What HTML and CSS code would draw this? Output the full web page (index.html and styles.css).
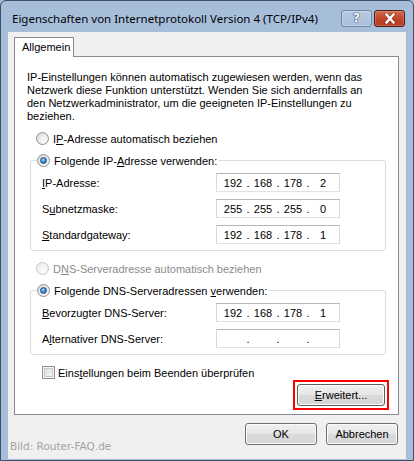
FILE: index.html
```html
<!DOCTYPE html>
<html lang="de">
<head>
<meta charset="utf-8">
<title>Eigenschaften von Internetprotokoll Version 4 (TCP/IPv4)</title>
<link rel="stylesheet" href="styles.css">
</head>
<body>
<div class="window">
  <div class="titlebar">
    <span class="title">Eigenschaften von Internetprotokoll Version 4 (TCP/IPv4)</span>
    <div class="caption-btns">
      <span class="cbtn help">?</span>
      <span class="cbtn close">
        <svg width="14" height="11" viewBox="0 0 14 11">
          <path d="M3.5 1.5 L10.5 9.5 M10.5 1.5 L3.5 9.5" stroke="#6a2414" stroke-width="4" stroke-linecap="square" opacity="0.55"/>
          <path d="M3.5 1.5 L10.5 9.5 M10.5 1.5 L3.5 9.5" stroke="#ffffff" stroke-width="2.4" stroke-linecap="square"/>
        </svg>
      </span>
    </div>
  </div>
  <div class="client">
    <div class="tabs"><span class="tab">Allgemein</span></div>
    <div class="panel">
      <p class="intro">IP-Einstellungen können automatisch zugewiesen werden, wenn das Netzwerk diese Funktion unterstützt. Wenden Sie sich andernfalls an den Netzwerkadministrator, um die geeigneten IP-Einstellungen zu beziehen.</p>

      <div class="opt top-opt"><span class="radio"></span><span>I<u>P</u>-Adresse automatisch beziehen</span></div>

      <fieldset class="group">
        <legend><span class="opt"><span class="radio checked"></span><span>Folgende IP-<u>A</u>dresse verwenden:</span></span></legend>
        <div class="field-row">
          <span class="label"><u>I</u>P-Adresse:</span>
          <div class="ip"><span class="seg">192</span><span class="dot">.</span><span class="seg">168</span><span class="dot">.</span><span class="seg">178</span><span class="dot">.</span><span class="seg">2</span></div>
        </div>
        <div class="field-row">
          <span class="label">S<u>u</u>bnetzmaske:</span>
          <div class="ip"><span class="seg">255</span><span class="dot">.</span><span class="seg">255</span><span class="dot">.</span><span class="seg">255</span><span class="dot">.</span><span class="seg">0</span></div>
        </div>
        <div class="field-row">
          <span class="label"><u>S</u>tandardgateway:</span>
          <div class="ip"><span class="seg">192</span><span class="dot">.</span><span class="seg">168</span><span class="dot">.</span><span class="seg">178</span><span class="dot">.</span><span class="seg">1</span></div>
        </div>
      </fieldset>

      <div class="opt top-opt disabled dns-auto"><span class="radio"></span><span>D<u>N</u>S-Serveradresse automatisch beziehen</span></div>

      <fieldset class="group">
        <legend><span class="opt"><span class="radio checked"></span><span>Folgende DNS-Serveradressen <u>v</u>erwenden:</span></span></legend>
        <div class="field-row">
          <span class="label"><u>B</u>evorzugter DNS-Server:</span>
          <div class="ip"><span class="seg">192</span><span class="dot">.</span><span class="seg">168</span><span class="dot">.</span><span class="seg">178</span><span class="dot">.</span><span class="seg">1</span></div>
        </div>
        <div class="field-row">
          <span class="label">A<u>l</u>ternativer DNS-Server:</span>
          <div class="ip"><span class="seg"></span><span class="dot">.</span><span class="seg"></span><span class="dot">.</span><span class="seg"></span><span class="dot">.</span><span class="seg"></span></div>
        </div>
      </fieldset>

      <div class="check-row"><span class="checkbox"></span><span>Eins<u>t</u>ellungen beim Beenden überprüfen</span></div>

      <div class="adv-row">
        <div class="highlight"><button class="btn adv"><u>E</u>rweitert...</button></div>
      </div>
    </div>
    <div class="footer">
      <span class="watermark">Bild: Router-FAQ.de</span>
      <button class="btn">OK</button>
      <button class="btn">Abbrechen</button>
    </div>
  </div>
</div>
</body>
</html>
```
FILE: styles.css
```css
html, body {
  margin: 0;
  padding: 0;
  background: #a7bedb;
}

body {
  font-family: "Liberation Sans", Arial, sans-serif;
  font-size: 11px;
  color: #000;
}

.window {
  width: 414px;
  height: 461px;
  box-sizing: border-box;
  border: 1px solid #3f506a;
  border-radius: 6px 6px 0 0;
  background: #a7bedb;
  padding: 0 7px 1px;
  display: flex;
  flex-direction: column;
}

.titlebar {
  height: 31px;
  flex: none;
  display: flex;
  align-items: flex-start;
}

.title {
  font-family: "Noto Sans", "Open Sans", sans-serif;
  font-size: 11.5px;
  line-height: 17px;
  margin-top: 9px;
  padding-left: 4px;
  color: #000;
  white-space: nowrap;
}

.caption-btns {
  margin-left: auto;
  margin-top: 9px;
  margin-right: 1px;
  display: flex;
  gap: 2px;
}

.cbtn {
  width: 31px;
  height: 17px;
  box-sizing: border-box;
  border-radius: 3px;
  display: flex;
  align-items: center;
  justify-content: center;
}

.help {
  border: 1px solid #6d86a6;
  background: linear-gradient(#b7cbe3, #a9bfdc);
  box-shadow: inset 0 0 0 1px rgba(255,255,255,0.25);
  color: #fff;
  font-family: "DejaVu Sans", sans-serif;
  font-weight: bold;
  font-size: 12px;
  line-height: 15px;
  text-shadow: 0 0 1px #2c3d55, 0 0 1px #2c3d55, 0 0 1px #2c3d55;
}

.close {
  border: 1px solid #4e1e14;
  background: linear-gradient(#d06a4f, #c2432b 55%, #b83b24);
  box-shadow: inset 0 0 0 1px rgba(255,255,255,0.2);
}

.client {
  flex: 1;
  background: #f0f0f0;
  padding: 5px 7px 0 6px;
  display: flex;
  flex-direction: column;
}

.tabs {
  display: flex;
  position: relative;
  z-index: 1;
  margin-bottom: -1px;
}

.tab {
  width: 60px;
  height: 20px;
  box-sizing: border-box;
  border: 1px solid #898c95;
  border-bottom: none;
  background: #fff;
  padding-left: 7px;
  line-height: 19px;
}

.panel {
  border: 1px solid #898c95;
  background: #fff;
  padding: 14px 12px 4px 12px;
}

.intro {
  margin: 0;
  width: 342px;
  line-height: 13px;
}

.opt {
  display: flex;
  align-items: center;
  height: 15px;
  gap: 4px;
  white-space: nowrap;
}

.top-opt {
  margin-top: 8px;
  padding-left: 9px;
}

.dns-auto {
  margin-top: 10px;
}

.disabled {
  color: #8a8a8a;
}

.radio {
  width: 13px;
  height: 13px;
  box-sizing: border-box;
  border-radius: 50%;
  border: 1px solid #8f9194;
  background: radial-gradient(circle at 65% 70%, #fbfbfb 0, #ececec 45%, #d4d4d4 100%);
  display: flex;
  align-items: center;
  justify-content: center;
  flex: none;
}

.disabled .radio {
  border-color: #c4c6c8;
  background: radial-gradient(circle at 65% 70%, #fdfdfd 0, #f1f1f1 60%, #e4e4e4 100%);
}

.radio.checked::after {
  content: "";
  width: 7px;
  height: 7px;
  box-sizing: border-box;
  border-radius: 50%;
  border: 1px solid #1f4b7d;
  background: radial-gradient(circle at 40% 35%, #bfe6ff 0, #4a9fe6 35%, #1c5fa8 100%);
}

.group {
  margin: 7px 0 0 3px;
  padding: 5px 0 6px 11px;
  border: 1px solid #d5dfe5;
  border-radius: 3px;
  min-width: 0;
}

.group legend {
  margin-left: -5px;
  padding: 0 2px 0 0;
}

.field-row {
  display: flex;
  align-items: center;
  height: 19px;
}

.field-row + .field-row {
  margin-top: 7px;
}

.label {
  width: 174px;
  flex: none;
}

.ip {
  width: 124px;
  height: 19px;
  box-sizing: border-box;
  border: 1px solid;
  border-color: #b3b6bd #d6d9de #dfe3e8 #d6d9de;
  background: #fff;
  display: flex;
  align-items: center;
  padding-left: 4px;
}

.seg {
  width: 24px;
  text-align: center;
}

.dot {
  width: 6px;
  text-align: center;
}

.check-row {
  display: flex;
  align-items: center;
  height: 15px;
  gap: 3px;
  margin-top: 10px;
  padding-left: 15px;
}

.checkbox {
  width: 13px;
  height: 13px;
  box-sizing: border-box;
  border: 1px solid #8e8f8f;
  background: linear-gradient(135deg, #dcdcdc, #f6f6f6);
  box-shadow: inset 0 0 0 1px #f7f7f7, inset 0 0 0 2px #c9c9c9;
  flex: none;
}

.adv-row {
  display: flex;
  justify-content: flex-end;
  margin-right: -3px;
  margin-top: 0;
}

.highlight {
  border: 2px solid #ff0000;
  padding: 2px;
  display: flex;
}

.btn {
  font-family: "Liberation Sans", Arial, sans-serif;
  font-size: 11px;
  color: #000;
  width: 72px;
  height: 22px;
  box-sizing: border-box;
  border: 1px solid #707070;
  border-radius: 3px;
  background: linear-gradient(#f0f0f0, #e6e6e6 50%, #dadada 51%, #d6d6d6);
  box-shadow: inset 0 0 0 1px #fbfbfb;
  padding: 0;
  margin: 0;
}

.btn.adv {
  width: 88px;
  border-color: #5d5d5d;
}

.footer {
  display: flex;
  align-items: flex-start;
  gap: 9px;
  margin-top: 8px;
  padding-right: 1px;
}

.watermark {
  margin-right: auto;
  margin-left: -4px;
  margin-top: 17px;
  font-family: "DejaVu Sans", Verdana, sans-serif;
  font-size: 10.5px;
  color: #a3a3a3;
}
```
